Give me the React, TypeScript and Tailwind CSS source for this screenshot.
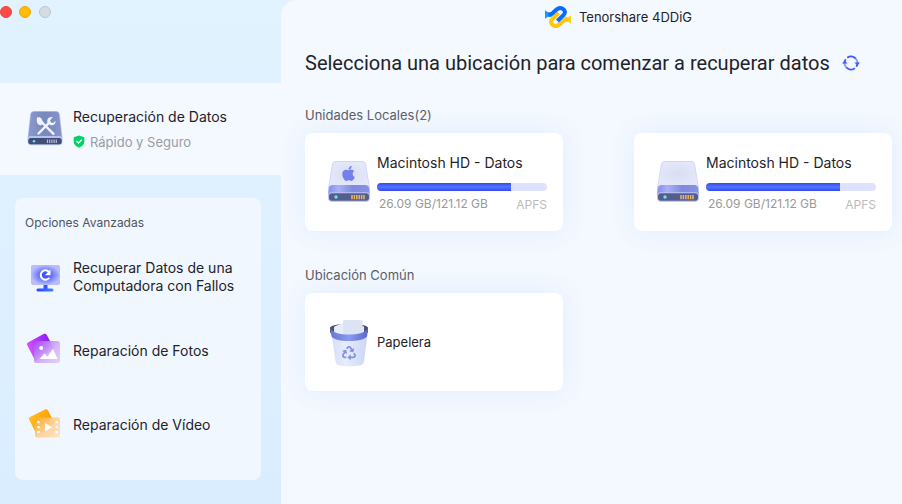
import type { ReactNode } from "react";
import { FaApple, FaRecycle } from "react-icons/fa";

type Drive = {
  id: string;
  name: string;
  used: string;
  total: string;
  format: string;
  percent: number;
  system: boolean;
};

const DRIVES: Drive[] = [
  { id: "disk1", name: "Macintosh HD - Datos", used: "26.09 GB", total: "121.12 GB", format: "APFS", percent: 79, system: true },
  { id: "disk2", name: "Macintosh HD - Datos", used: "26.09 GB", total: "121.12 GB", format: "APFS", percent: 79, system: false },
];

const ADVANCED_OPTIONS = [
  { id: "crash", label: "Recuperar Datos de una Computadora con Fallos", icon: <ComputerIcon /> },
  { id: "photo", label: "Reparación de Fotos", icon: <PhotoIcon /> },
  { id: "video", label: "Reparación de Vídeo", icon: <VideoIcon /> },
];

export default function App() {
  return (
    <div className="flex min-h-screen bg-gradient-to-b from-[#e2f3ff] to-[#daedff] font-['Inter','Liberation_Sans',sans-serif] text-[#1f2329]">
      <Sidebar />
      <main className="min-w-0 flex-1 rounded-tl-2xl bg-[#f4f8ff] pr-[10px] pb-6 pl-6">
        <header className="flex h-[34px] items-center justify-center gap-2 pl-10">
          <LogoIcon />
          <span className="text-[13px] leading-5">Tenorshare 4DDiG</span>
        </header>

        <div className="mt-[15px] flex items-center gap-3">
          <h1 className="font-['Roboto','Liberation_Sans',sans-serif] text-[20px] leading-7">
            Selecciona una ubicación para comenzar a recuperar datos
          </h1>
          <button type="button" aria-label="Actualizar">
            <RefreshIcon />
          </button>
        </div>

        <Section title={`Unidades Locales(${DRIVES.length})`} className="mt-7">
          {DRIVES.map((drive) => (
            <DriveCard key={drive.id} drive={drive} />
          ))}
        </Section>

        <Section title="Ubicación Común" className="mt-[34px]">
          <Card>
            <TrashIcon />
            <span className="text-[13px] leading-5">Papelera</span>
          </Card>
        </Section>
      </main>
    </div>
  );
}

function Sidebar() {
  return (
    <aside className="w-[281px] shrink-0">
      <div className="flex h-[83px] items-start gap-[7px] pt-[6px]">
        <button type="button" aria-label="Cerrar" className="size-3 rounded-full border border-[#e8453c] bg-[#ff4b45]" />
        <button type="button" aria-label="Minimizar" className="size-3 rounded-full border border-[#eaa80c] bg-[#ffbc05]" />
        <button type="button" aria-label="Ampliar" className="ml-px size-3 rounded-full border border-[#bcc6cd] bg-[#d5dde3]" />
      </div>

      <button type="button" className="flex h-[92px] w-full items-center gap-2 bg-[#f4f8ff] pl-[25px] text-left">
        <ToolDriveIcon />
        <span className="flex flex-col gap-[5px]">
          <span className="text-[14px] leading-5">Recuperación de Datos</span>
          <span className="flex items-center gap-[5px] text-[13px] leading-5 text-[#9a9da3]">
            <ShieldIcon />
            Rápido y Seguro
          </span>
        </span>
      </button>

      <section className="mx-[15px] mt-[23px] mr-5 rounded-lg bg-[#f0f7ff] pt-[15px] pb-[18px]">
        <h2 className="pl-[10px] text-[12px] leading-5 text-[#50555c]">Opciones Avanzadas</h2>
        <ul className="mt-[7px]">
          {ADVANCED_OPTIONS.map((option) => (
            <li key={option.id}>
              <button type="button" className="flex h-[74px] w-full items-center gap-2 pr-5 pl-[10px] text-left text-[14px] leading-[18px]">
                {option.icon}
                <span>{option.label}</span>
              </button>
            </li>
          ))}
        </ul>
      </section>
    </aside>
  );
}

function Section({ title, className, children }: { title: string; className: string; children: ReactNode }) {
  return (
    <section className={className}>
      <h2 className="text-[13px] leading-5 text-[#50555c]">{title}</h2>
      <div className="mt-2 flex flex-wrap justify-between gap-y-6">{children}</div>
    </section>
  );
}

function Card({ children }: { children: ReactNode }) {
  return (
    <button
      type="button"
      className="flex h-[98px] w-[258px] items-center gap-1 rounded-lg bg-white pr-4 pl-5 text-left shadow-[0_0_24px_#dfeeff]"
    >
      {children}
    </button>
  );
}

function DriveCard({ drive }: { drive: Drive }) {
  return (
    <Card>
      <DriveIcon system={drive.system} />
      <span className="flex min-w-0 flex-1 flex-col pt-[2px]">
        <span className="text-[14px] leading-5">{drive.name}</span>
        <span
          role="progressbar"
          aria-label="Espacio usado"
          aria-valuenow={drive.percent}
          className="mt-[10px] block h-2 overflow-hidden rounded-full bg-[#dfe2ff]"
        >
          <span
            className="block h-full bg-gradient-to-b from-[#3049f5] via-[#5673ff] to-[#3049f5]"
            style={{ width: `${drive.percent}%` }}
          />
        </span>
        <span className="mt-1 flex justify-between pl-[2px] text-[12px] leading-[18px] text-[#999]">
          <span>
            {drive.used}/{drive.total}
          </span>
          <span className="pt-[2px] leading-4 text-[#bbb]">{drive.format}</span>
        </span>
      </span>
    </Card>
  );
}

function LogoIcon() {
  return (
    <svg width="26" height="24" viewBox="0 0 26 24" fill="none" aria-hidden="true">
      <path d="M0 5.200 2.800 7.300H7l-.5 4.500H2.800L0 13.800z" fill="#159bf3" />
      <path d="M26 18.800 23.200 16.700H19l.5-4.500h3.700L26 10.200z" fill="#ffd30a" />
      <path d="M22.500 14.300h-1.200c-1.800 0-3 1.300-4.800 3.300-2.500 2.800-5 4.200-7.500 3.100-3-1.300-3.800-4.400-1.700-6.500L13.600 8" stroke="#fdc60a" strokeWidth="4" />
      <path d="M3.500 9.700h1.200c1.800 0 3-1.300 4.800-3.300 2.500-2.800 5-4.200 7.500-3.100 3 1.300 3.800 4.400 1.700 6.500L12.400 16" stroke="#0a6cff" strokeWidth="4" />
    </svg>
  );
}

function RefreshIcon() {
  return (
    <svg className="block" width="18" height="18" viewBox="0 0 18 18" fill="none" aria-hidden="true">
      <g stroke="#435cff" strokeWidth="1.900">
        <path d="M2.500 9.500A6.500 6.500 0 0 1 3.700 5.200" />
        <path d="M5.200 3.700A6.500 6.500 0 0 1 13.700 4.600" />
        <path d="M15.500 8.500A6.500 6.500 0 0 1 14.300 12.800" />
        <path d="M12.800 14.300A6.500 6.500 0 0 1 4.300 13.400" />
        <path d="M13.700 4.600A6.500 6.500 0 0 1 15.500 8.500M4.300 13.400A6.500 6.500 0 0 1 2.500 9.500" opacity=".6" />
      </g>
      <path d="M0 9.600 2.800 6.400 5.500 9.600zM12.500 8.400h5.500L15.200 11.600z" fill="#435cff" />
    </svg>
  );
}

function ShieldIcon() {
  return (
    <svg width="12" height="13" viewBox="0 0 12 13" fill="none" aria-hidden="true">
      <path d="M6 .5 11.300 2.300V7c0 2.500-2 4.300-5.300 5.700C2.700 11.300.7 9.500.7 7V2.300z" fill="#06d167" />
      <path d="m3.500 6 2 2 3.200-3.200" stroke="#fff" strokeWidth="1.300" />
    </svg>
  );
}

function ToolDriveIcon() {
  return (
    <svg className="shrink-0" width="40" height="40" viewBox="0 0 40 40" fill="none" aria-hidden="true">
      <defs>
        <linearGradient id="tool-top" x1="0" y1="0" x2="1" y2="0">
          <stop stopColor="#8b99cb" />
          <stop offset=".5" stopColor="#7788be" />
          <stop offset="1" stopColor="#8794c7" />
        </linearGradient>
      </defs>
      <path d="M9 2h22c2 0 3.500 1.300 3.800 3.200L37.500 29v3.500c0 2.300-1.500 3.700-3.700 3.700H6.300c-2.200 0-3.700-1.400-3.700-3.700V29L5.200 5.200C5.500 3.300 7 2 9 2z" fill="#b5c0ef" />
      <path d="M9 2.800h22c1.700 0 2.800 1 3 2.600l2.600 22.300c-.7-.5-1.600-.7-2.600-.7H6c-1 0-1.900.2-2.600.7L6 5.400c.2-1.600 1.300-2.600 3-2.600z" fill="url(#tool-top)" />
      <rect x="3.300" y="29" width="33.400" height="6.300" rx="2.500" fill="#434c78" />
      <circle cx="9" cy="32.200" r="1.300" fill="#59e6ef" />
      <path d="M22.500 30.500v3.500M24.700 30.500v3.500M26.900 30.500v3.500M29.100 30.500v3.500M31.300 30.500v3.500" stroke="#b5bdd8" strokeWidth="1.200" />
      <path d="m15.500 12 13 12.800M13.500 24.500 24 13.800" stroke="#eef2ff" strokeWidth="2.400" strokeLinecap="round" />
      <path d="M12 8.500c2.500-1 5 0 5.500 3.500l1.500 2-2.800 2.200c-3.400.3-5.200-3-4.200-7.700z" fill="#eef2ff" />
      <path d="M27.800 8.200 25 11.200l1 2.400 2.300.4 2.100-2.300c.6 3.300-2.200 5.200-5.200 4.300l-2.600-2.200c-1.400-3.200 1.500-6.700 5.200-5.600z" fill="#eef2ff" />
    </svg>
  );
}

function DriveIcon({ system }: { system: boolean }) {
  return (
    <span className="relative block shrink-0">
      <svg className="block" width="48" height="46" viewBox="0 0 48 46" fill="none" aria-hidden="true">
        <defs>
          <linearGradient id="drive-band" x1="0" y1="0" x2="1" y2="0">
            <stop stopColor="#868fe8" />
            <stop offset=".25" stopColor="#a8b0f5" />
            <stop offset=".6" stopColor="#7f8ade" />
            <stop offset="1" stopColor="#8993e4" />
          </linearGradient>
          <radialGradient id="drive-top">
            <stop stopColor="#d8deef" />
            <stop offset="1" stopColor="#e4e7fb" />
          </radialGradient>
        </defs>
        <path d="M11 2h26c2.200 0 3.700 1.400 4 3.500L45 29v9.500c0 2.700-1.700 4.200-4.200 4.200H7.200C4.700 42.700 3 41.200 3 38.500V29L7 5.500C7.300 3.400 8.800 2 11 2z" fill="#cdd2f5" />
        <path d="M11.200 2.800h25.600c1.900 0 3.100 1.100 3.400 3L44 27H4L7.800 5.800c.3-1.900 1.500-3 3.400-3z" fill="url(#drive-top)" />
        <path d="M4 29c.3-1.700 1.500-3 3.500-3h33c2 0 3.200 1.300 3.500 3l.8 7H3.200z" fill="url(#drive-band)" />
        <rect x="3" y="33.300" width="42" height="9.400" rx="4" fill="#bdc5f5" />
        <rect x="4" y="34.300" width="40" height="7.400" rx="3" fill="#555d8d" />
        <circle cx="11" cy="38" r="1.700" fill="#6ae5df" />
        <path d="M27 35.900v4.300M29.400 35.900v4.300M31.800 35.900v4.300M34.200 35.900v4.300M36.600 35.900v4.300M39 35.900v4.300" stroke="#efb45f" strokeWidth="1.500" />
      </svg>
      {system && <FaApple className="absolute top-[6px] left-[15px] size-[17px] text-[#7481ed]" />}
    </span>
  );
}

function ComputerIcon() {
  return (
    <svg className="shrink-0" width="40" height="40" viewBox="0 0 40 40" fill="none" aria-hidden="true">
      <defs>
        <radialGradient id="screen">
          <stop offset=".2" stopColor="#4055fb" />
          <stop offset="1" stopColor="#b9bdfc" />
        </radialGradient>
        <linearGradient id="stand" x1="0" y1="0" x2="1" y2="0">
          <stop stopColor="#2945ff" />
          <stop offset="1" stopColor="#3c86ff" />
        </linearGradient>
      </defs>
      <path d="M18.500 27h4v6h-4z" fill="#3558f5" />
      <rect x="6" y="8" width="29" height="20" rx="2" fill="url(#screen)" />
      <rect x="11.500" y="31.500" width="17" height="3" rx="1.500" fill="url(#stand)" />
      <path d="M24.300 20.700A4.700 4.700 0 1 1 23.800 14.700" stroke="#fff" strokeWidth="2" />
      <path d="M25.500 12.500v5.800h-5.600z" fill="#fff" />
    </svg>
  );
}

function PhotoIcon() {
  return (
    <svg className="shrink-0" width="40" height="40" viewBox="0 0 40 40" fill="none" aria-hidden="true">
      <defs>
        <linearGradient id="photo-back" x1="0" y1=".5" x2="1" y2=".2">
          <stop stopColor="#d654ff" />
          <stop offset="1" stopColor="#8210f5" />
        </linearGradient>
        <linearGradient id="photo-front" x1="0" y1="0" x2="1" y2=".8">
          <stop stopColor="#a743fa" />
          <stop offset=".6" stopColor="#d0aefa" />
          <stop offset="1" stopColor="#dcc9fb" />
        </linearGradient>
      </defs>
      <path d="M3 11.500 18.500 3c1.300-.7 2.600-.3 3.300 1L29 17.500 12.500 29c-1.200.8-2.400.4-3-.8L2.400 14.500c-.7-1.300-.5-2.300.6-3z" fill="url(#photo-back)" />
      <rect x="9" y="10" width="26" height="22" rx="2.500" fill="url(#photo-front)" opacity=".93" />
      <circle cx="16.200" cy="17" r="2" fill="#fff" />
      <path d="m14.500 28 5-5.800 3 3.500 5.500-8 4.500 10.300z" fill="#fff" />
    </svg>
  );
}

function VideoIcon() {
  return (
    <svg className="shrink-0" width="40" height="40" viewBox="0 0 40 40" fill="none" aria-hidden="true">
      <defs>
        <linearGradient id="video-back" x1="0" y1="0" x2="1" y2=".3">
          <stop stopColor="#ffc225" />
          <stop offset="1" stopColor="#ff9800" />
        </linearGradient>
        <linearGradient id="video-front" x1="0" y1="0" x2="1" y2=".8">
          <stop stopColor="#ffa719" />
          <stop offset=".5" stopColor="#fdce93" />
          <stop offset="1" stopColor="#fce0bd" />
        </linearGradient>
      </defs>
      <path d="m5 12 15-7.500c1.300-.6 2.300-.2 3 1L29.500 18 14 29c-1.200.8-2.400.4-3-.8L4.300 15c-.7-1.300-.5-2.300.7-3z" fill="url(#video-back)" />
      <rect x="10" y="12.500" width="25" height="20" rx="2" fill="url(#video-front)" opacity=".93" />
      <path d="M12.200 16h2.600v2.300h-2.600zM12.200 21h2.600v2.300h-2.600zM12.200 26h2.600v2.300h-2.600zM30.500 16h2.600v2.300h-2.600zM30.500 21h2.600v2.300h-2.600zM30.500 26h2.600v2.300h-2.600z" fill="#fff" />
      <path d="M20 18v8.500l7-4.200z" fill="#fff" />
    </svg>
  );
}

function TrashIcon() {
  return (
    <span className="relative block shrink-0">
      <svg className="block" width="48" height="54" viewBox="0 0 48 54" fill="none" aria-hidden="true">
        <defs>
          <linearGradient id="bin-body" x1="0" y1="0" x2="1" y2="0">
            <stop stopColor="#d6def8" />
            <stop offset=".4" stopColor="#e7ecfd" />
            <stop offset="1" stopColor="#ccd6f4" />
          </linearGradient>
          <linearGradient id="bin-rim" x1="0" y1="0" x2="1" y2="0">
            <stop stopColor="#6874d2" />
            <stop offset=".5" stopColor="#8b99f0" />
            <stop offset="1" stopColor="#5967c8" />
          </linearGradient>
        </defs>
        <path d="M6.500 19h36L39 46.500c-.4 2.500-2 3.500-4.500 4-5 1-14.500 1-19.500 0-2.500-.5-4.100-1.500-4.500-4z" fill="url(#bin-body)" />
        <path d="M5 12.500c1.500-1.800 4.500-2.500 8-3h22c3.500.5 6.500 1.200 8 3v5l-8 3.500H13l-8-3.500z" fill="#4a5273" />
        <path d="M9 13c0-1 .6-1.600 1.500-2L17 8.500h6l16 3V22H9z" fill="#e7ecfa" />
        <path d="M18 6.500c0-1 .7-1.500 1.500-1.500h16.300c1.200 0 1.700.7 1.700 1.700V22H18z" fill="#dce3f5" />
        <path d="M5 13c3 5 10 6.500 19 6.500S40 18 43 13l-1 8.500c-3.500 3.500-9.500 4.500-18 4.500s-14-1-17.500-4.500z" fill="url(#bin-rim)" />
      </svg>
      <FaRecycle className="absolute top-[31px] left-[17px] size-[14px] text-[#8291e6]" />
    </span>
  );
}
